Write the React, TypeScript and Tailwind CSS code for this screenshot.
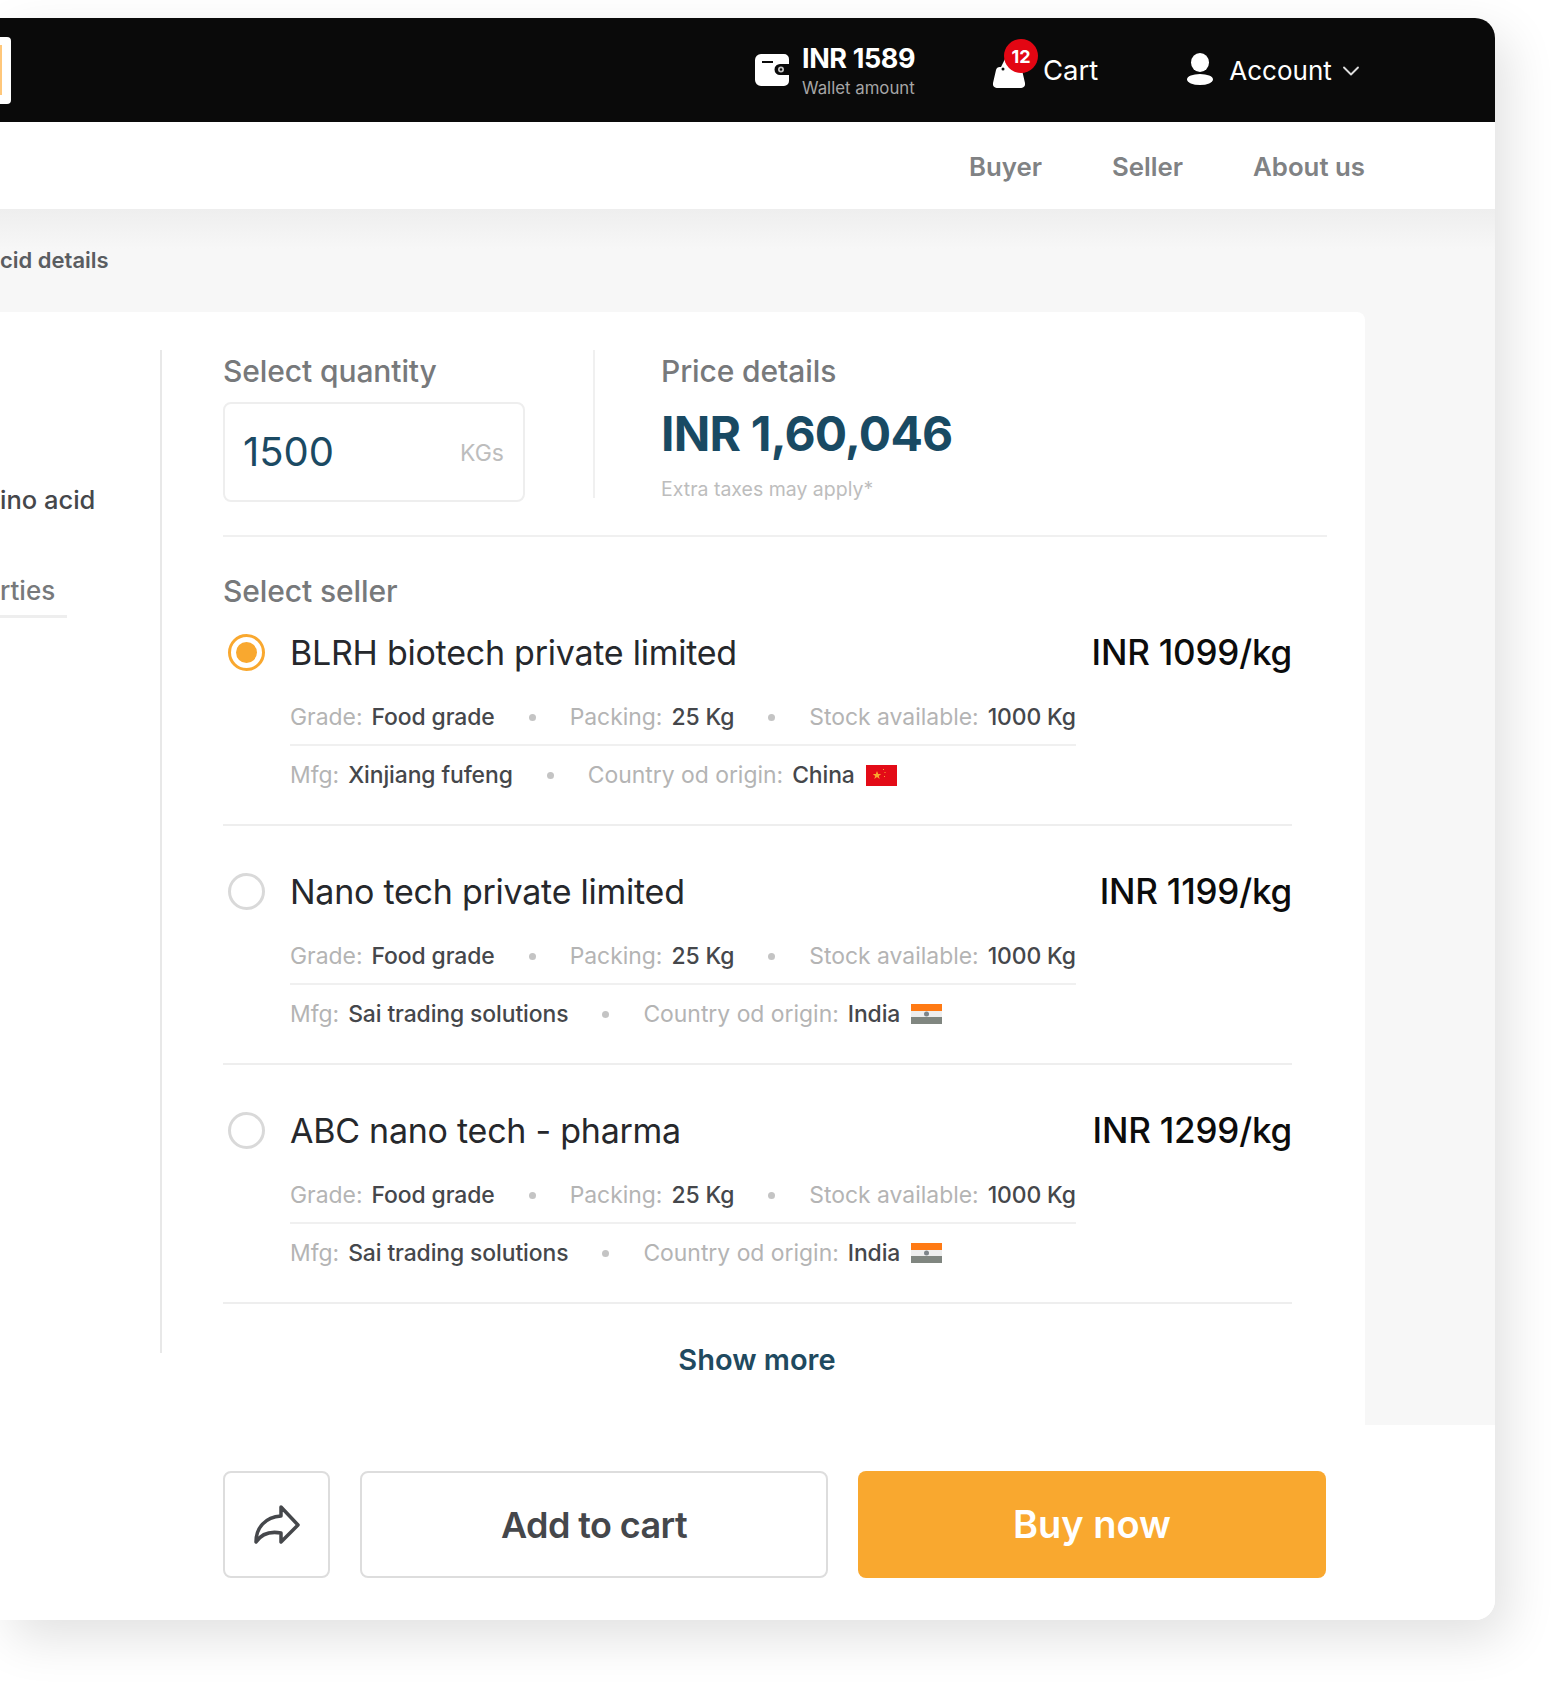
import { ChevronDown } from "lucide-react";

type Seller = {
  name: string;
  price: string;
  mfg: string;
  country: string;
  selected?: boolean;
};

const sellers: Seller[] = [
  { name: "BLRH biotech private limited", price: "INR 1099/kg", mfg: "Xinjiang fufeng", country: "China", selected: true },
  { name: "Nano tech private limited", price: "INR 1199/kg", mfg: "Sai trading solutions", country: "India" },
  { name: "ABC nano tech - pharma", price: "INR 1299/kg", mfg: "Sai trading solutions", country: "India" },
];

function Flag({ country }: { country: string }) {
  if (country === "China") {
    return (
      <svg width="31" height="21" viewBox="0 0 31 21" className="ml-[11px] shrink-0">
        <rect width="31" height="21" fill="#e30b17" />
        <path d="M11 6l1.2 3h3l-2.4 1.9.9 3-2.7-1.8-2.7 1.8.9-3L6.800 9h3z" fill="#f9a82f" />
        <path d="M17 4l1 1M19 7v1M19 11l-1 1" stroke="#f9a82f" strokeWidth="1" />
      </svg>
    );
  }
  return (
    <svg width="31" height="20" viewBox="0 0 31 20" className="ml-[11px] shrink-0">
      <rect width="31" height="7" fill="#ff7a14" />
      <rect y="7" width="31" height="6" fill="#eeeeee" />
      <rect y="13" width="31" height="7" fill="#808680" />
      <circle cx="15.500" cy="10" r="2.500" fill="#7d8488" />
    </svg>
  );
}

function Meta({ label, value }: { label: string; value: string }) {
  return (
    <span className="whitespace-nowrap">
      <span className="text-[#b4b4b4]">{label}</span>
      <span className="ml-[9px] font-medium tracking-[-0.1px] text-[#45474b]">{value}</span>
    </span>
  );
}

function Dot() {
  return <span className="mx-[34px] h-[7px] w-[7px] shrink-0 rounded-full bg-[#c4c4c4]" />;
}

function SellerRow({ seller, first }: { seller: Seller; first: boolean }) {
  return (
    <div className={`${first ? "pt-[21px]" : "pt-[43px]"} border-b-2 border-[#eeeeee] pb-[20px]`}>
      <div className="flex h-[44px] items-center justify-between">
        <div className="flex items-center">
          {seller.selected ? (
            <span className="ml-[5px] flex h-[37px] w-[37px] items-center justify-center rounded-full border-[3px] border-[#f9a82f]">
              <span className="h-[21px] w-[21px] rounded-full bg-[#f9a82f]" />
            </span>
          ) : (
            <span className="ml-[5px] h-[37px] w-[37px] rounded-full border-[3px] border-[#d9d9d9]" />
          )}
          <span className="ml-[25px] text-[34px] tracking-[-0.25px] text-[#26282c]">{seller.name}</span>
        </div>
        <span className="text-[35px] font-medium tracking-[-0.2px] text-[#0c0c0c]">{seller.price}</span>
      </div>
      <div className="ml-[67px] mt-[21px] w-[786px] text-[22.900px]">
        <div className="flex h-[51px] items-center border-b-2 border-[#f0f0f0] pb-[5px]">
          <Meta label="Grade:" value="Food grade" />
          <Dot />
          <Meta label="Packing:" value="25 Kg" />
          <Dot />
          <Meta label="Stock available:" value="1000 Kg" />
        </div>
        <div className="flex h-[58px] items-center">
          <Meta label="Mfg:" value={seller.mfg} />
          <Dot />
          <Meta label="Country od origin:" value={seller.country} />
          <Flag country={seller.country} />
        </div>
      </div>
    </div>
  );
}

function TopBar() {
  return (
    <header className="flex h-[104px] shrink-0 items-center bg-[#0a0a0a] text-white">
      <div className="flex h-[67px] w-[11px] items-center rounded-r-[4px] bg-white">
        <div className="h-[50px] w-[2px] bg-[#ffc77a]" />
      </div>
      <div className="ml-[744px] flex items-center">
        <svg width="34" height="33" viewBox="0 0 34 33">
          <path d="M6 0h23a5 5 0 0 1 5 5v5H25a5.500 5.500 0 0 0 0 11h9v6a5 5 0 0 1-5 5H6a6 6 0 0 1-6-6V6a6 6 0 0 1 6-6z" fill="#fff" />
          <rect x="7" y="7" width="11" height="2" fill="#0a0a0a" />
          <circle cx="26" cy="15.500" r="3" fill="#c4c4c4" />
          <circle cx="26" cy="15.500" r="1.200" fill="#0a0a0a" />
        </svg>
        <div className="ml-[13px] w-[120px]">
          <div className="text-[27px] font-bold leading-[32px] tracking-[-0.4px]">INR 1589</div>
          <div className="mt-[3px] whitespace-nowrap text-[16.800px] leading-5 text-[#a6a6a6]">Wallet amount</div>
        </div>
      </div>
      <div className="relative ml-[71px] flex h-[38px] items-center">
        <svg width="32" height="31" viewBox="0 0 32 31" className="mt-[5px]">
          <path d="M8 10l4-8h8l4 8h1a4 4 0 0 1 4 3l3 13a4 4 0 0 1-4 5H4a4 4 0 0 1-4-5l3-13a4 4 0 0 1 4-3z" fill="#fff" />
          <circle cx="10" cy="12" r="1.500" fill="#0a0a0a" />
        </svg>
        <span className="absolute left-[11px] top-[-12px] flex h-[34px] w-[34px] items-center justify-center rounded-full bg-[#e30613] text-[18px] font-bold">
          12
        </span>
        <span className="ml-[18px] mt-[2px] text-[27.500px]">Cart</span>
      </div>
      <div className="ml-[89px] flex items-center">
        <svg width="26" height="32" viewBox="0 0 26 32" className="mb-[3px]">
          <ellipse cx="13" cy="9.500" rx="9" ry="9.500" fill="#fff" />
          <ellipse cx="13" cy="26.500" rx="13" ry="5.500" fill="#fff" />
        </svg>
        <span className="ml-[16px] mt-[1px] text-[26px]">Account</span>
        <ChevronDown size={28} strokeWidth={1.600} className="ml-[5px] mt-[1px] text-[#dddddd]" />
      </div>
    </header>
  );
}

export default function App() {
  return (
    <div className="h-[1692px] w-[1560px] overflow-hidden bg-white pt-[18px] font-['Inter',sans-serif]">
      <div className="flex h-[1602px] w-[1495px] flex-col overflow-hidden rounded-r-[20px] shadow-[12px_18px_50px_rgba(0,0,0,0.12)]">
        <TopBar />

        <nav className="flex h-[87px] shrink-0 items-center justify-end gap-[70px] bg-white pr-[130px] pt-[3px] text-[25.800px] font-semibold text-[#808284]">
          <span>Buyer</span>
          <span>Seller</span>
          <span>About us</span>
        </nav>

        <main className="flex flex-1 flex-col bg-[linear-gradient(#eeeeee,#f7f7f7_40px)] pr-[130px]">
          <div className="flex h-[103px] shrink-0 items-center text-[22px] font-semibold text-[#5a5d61]">
            cid details
          </div>
          <div className="flex flex-1 rounded-tr-[8px] bg-white pr-[38px] pt-[38px]">
            <aside className="h-[1003px] w-[162px] shrink-0 border-r-2 border-[#e8e8e8] pt-[134px]">
              <div className="flex h-[32px] items-center text-[25.500px] font-medium leading-none text-[#45474b]">ino acid</div>
              <div className="mt-[59px] h-[32px] w-[67px] text-[26px] font-medium leading-8 text-[#77797b]">rties</div>
              <div className="mt-[8px] h-[3px] w-[67px] bg-[#eeeeee]" />
            </aside>

            <div className="ml-[61px] flex-1">
              <div className="flex border-b-2 border-[#f0f0f0] pb-[32px]">
                <div className="w-[370px]">
                  <div className="mt-[3px] h-[36px] text-[30px] font-medium leading-[36px] tracking-[-0.1px] text-[#77797b]">Select quantity</div>
                  <div className="mt-[13px] flex h-[100px] w-[302px] items-center justify-between rounded-[8px] border-2 border-[#eeeeee] pl-[18px] pr-[19px]">
                    <span className="text-[40px] text-[#1b4a63]">1500</span>
                    <span className="mt-[2px] text-[23px] text-[#bdbdbd]">KGs</span>
                  </div>
                </div>
                <div className="h-[148px] w-[2px] bg-[#f0f0f0]" />
                <div className="pl-[66px]">
                  <div className="mt-[3px] h-[36px] text-[30px] font-medium leading-[36px] tracking-[-0.1px] text-[#77797b]">Price details</div>
                  <div className="mt-[15px] h-[60px] text-[48px] font-bold leading-[60px] tracking-[-0.8px] text-[#194a63]">INR 1,60,046</div>
                  <div className="mt-[11px] h-[28px] text-[19.500px] leading-7 text-[#bdbdbd]">Extra taxes may apply*</div>
                </div>
              </div>

              <div className="mt-[36px] h-[36px] text-[30px] font-medium leading-[36px] tracking-[-0.1px] text-[#77797b]">Select seller</div>

              <div className="w-[1069px]">
                {sellers.map((seller, i) => (
                  <SellerRow key={seller.name} seller={seller} first={i === 0} />
                ))}
                <div className="flex h-[111px] items-center justify-center pr-[1px] text-[29px] font-semibold text-[#1f4a60]">
                  Show more
                </div>
              </div>
            </div>
          </div>
        </main>

        <footer className="flex h-[195px] shrink-0 items-start bg-white pl-[223px] pt-[46px]">
          <button type="button" className="flex h-[107px] w-[107px] items-center justify-center rounded-[8px] border-2 border-[#dddddd]">
            <svg width="46" height="39" viewBox="0 0 46 39" fill="none" stroke="#45474b" strokeWidth="3.500" strokeLinejoin="round" strokeLinecap="round">
              <path d="M27 2l17 18-17 17v-9c-11-2-19 0-25 9 0-14 9-25 25-26z" />
            </svg>
          </button>
          <button type="button" className="ml-[30px] h-[107px] w-[468px] rounded-[8px] border-2 border-[#dddddd] text-[36px] font-semibold tracking-[-0.6px] text-[#45474b]">
            Add to cart
          </button>
          <button type="button" className="ml-[30px] h-[107px] w-[468px] rounded-[8px] bg-[#f9a82f] text-[38px] font-semibold text-white">
            Buy now
          </button>
        </footer>
      </div>
    </div>
  );
}
